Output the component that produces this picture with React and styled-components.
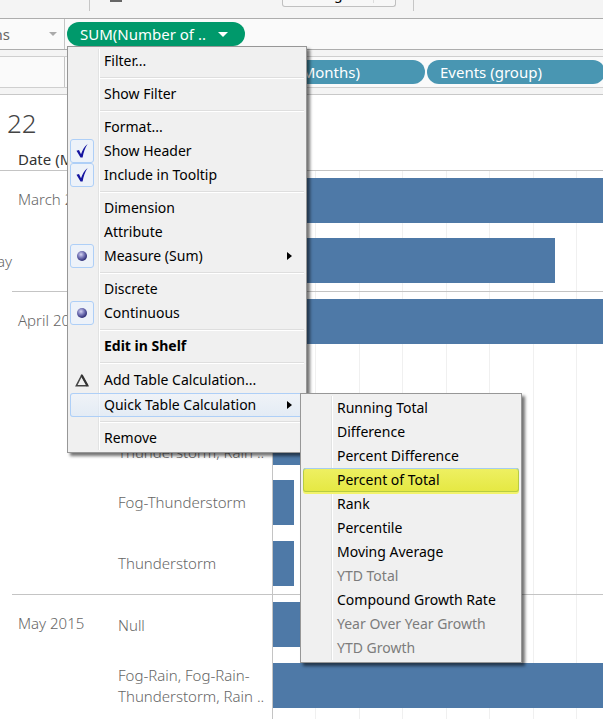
import React from "react";
import styled, { createGlobalStyle, css } from "styled-components";

const uiFont = '"Noto Sans", "Open Sans", sans-serif';
const viewFont = '"Noto Sans", "Open Sans", sans-serif';

const GlobalStyle = createGlobalStyle`
  * { box-sizing: border-box; }
  body { margin: 0; background: #fff; }
  button, input { font: inherit; color: inherit; margin: 0; }
`;

const Page = styled.div`
  display: flex;
  flex-direction: column;
  height: 100vh;
  overflow: hidden;
  background: #fff;
  font-family: ${viewFont};
`;

/* ---- toolbar ---- */
const Toolbar = styled.header`
  display: flex;
  align-items: flex-start;
  flex: none;
  height: 18px;
  background: #f4f4f4;
`;
const ToolDivider = styled.span`
  width: 1px;
  height: 11px;
  background: #c6c6c6;
  margin-left: ${(p) => p.$gap}px;
`;
const ToolGlyph = styled.span`
  width: 12px;
  height: 2px;
  margin-left: 20px;
  background: #666;
`;
const FitButton = styled.button`
  display: flex;
  align-items: flex-end;
  width: 114px;
  height: 7px;
  margin-left: 160px;
  padding: 0 0 3px 51px;
  overflow: hidden;
  border: 1px solid #c0c0c0;
  border-top: 0;
  border-radius: 0 0 3px 3px;
  background: #f7f7f7;
  font-size: 14px;
  line-height: 18px;
`;
const FitSplit = styled.span`
  width: 1px;
  height: 18px;
  margin-left: 30px;
  background: #ddd;
`;

/* ---- shelves ---- */
const Shelf = styled.section`
  display: flex;
  flex: none;
  height: 32px;
  background: #fafafa;
  border: solid ${(p) => p.$line};
  border-width: 1px 0;
`;
const ShelfGap = styled.div`
  flex: none;
  height: 6px;
  background: #f4f4f4;
`;
const ShelfLabel = styled.div`
  display: flex;
  align-items: center;
  width: 65px;
  border-right: 1px solid #c4c4c4;
  color: #666;
  font-size: 15px;
`;
const ClippedName = styled.span`
  display: flex;
  justify-content: flex-end;
  width: 10px;
  margin-right: 39px;
  overflow: hidden;
`;
const Pills = styled.div`
  display: flex;
  flex: 1;
  align-items: center;
  gap: 2px;
  min-width: 0;
  padding-left: ${(p) => p.$start}px;
`;
const PillAnchor = styled.div`
  position: relative;
  z-index: 2;
`;
const Pill = styled.button`
  display: flex;
  flex: none;
  align-items: center;
  gap: 12px;
  width: 178px;
  height: 24px;
  padding: 0 13px;
  border: 0;
  border-radius: 12px;
  background: ${(p) => p.$color};
  color: #fff;
  font-size: 15px;
  line-height: 24px;
  white-space: nowrap;
`;

/* ---- menus ---- */
const MenuPanel = styled.div`
  position: absolute;
  top: ${(p) => (p.$sub ? "0" : "100%")};
  left: ${(p) => (p.$sub ? "230px" : "0")};
  z-index: 3;
  width: ${(p) => (p.$sub ? 222 : 240)}px;
  padding: 2px;
  border: 1px solid #979797;
  background: linear-gradient(to right, transparent 28px, #e2e3e3 28px, #e2e3e3 29px, #fff 29px, #fff 30px, transparent 30px) 2px 2px / calc(100% - 4px) calc(100% - 4px) no-repeat #f0f0f0;
  box-shadow: 3px 3px 3px rgba(0, 0, 0, 0.55);
  color: #000;
  font-family: ${uiFont};
  font-size: 14px;
  line-height: 22px;
`;
const Anchor = styled.div`
  position: relative;
`;
const rowStyle = css`
  display: grid;
  grid-template-columns: 24px 1fr 6px;
  column-gap: 10px;
  align-items: center;
  width: 100%;
  height: ${(p) => (p.$tall ? 26 : 24)}px;
  padding: 0 11px 0 0;
  border: 0;
  background: none;
  text-align: left;
  white-space: nowrap;
`;
const MenuButton = styled.button`
  ${rowStyle}
  font-weight: ${(p) => (p.$strong ? 700 : 400)};
  &:disabled { color: #7c7c7c; }
  ${(p) =>
    p.$tone === "hover" &&
    css`
      border-radius: 3px;
      box-shadow: inset 0 0 0 1px #aecff7;
      background: linear-gradient(rgba(240, 245, 252, 0.6), rgba(218, 232, 248, 0.6));
    `}
  ${(p) =>
    p.$tone === "marked" &&
    css`
      border-radius: 3px;
      box-shadow: inset 0 1px #a5cdf0, inset 0 0 0 1px #b7cc42, 0 2px #f2f36a;
      background: linear-gradient(#eef063, #e5e842);
    `}
`;
const MenuToggle = styled.label`
  ${rowStyle}
`;
const ToggleCell = styled.span`
  display: grid;
  place-items: center;
  > * { grid-area: 1 / 1; }
`;
const ToggleBox = styled.input`
  appearance: none;
  width: 24px;
  height: 24px;
  border: 1px solid #aecff7;
  border-radius: 3px;
  background: #edf2f9;
`;
const IconCell = styled.span`
  display: grid;
  place-items: center;
`;
const Separator = styled.hr`
  height: 2px;
  margin: 4px 0 3px 30px;
  border: 0;
  border-top: 1px solid #dedede;
  background: #fff;
`;

/* ---- view ---- */
const View = styled.main`
  display: flex;
  flex: 1;
  flex-direction: column;
  min-height: 0;
  border-top: 1px solid #c8c8c8;
`;
const Title = styled.h1`
  margin: 0;
  padding: 10px 0 2px 7px;
  color: #444;
  font-size: 26px;
  font-weight: 300;
  line-height: 36px;
`;
const FieldHeader = styled.div`
  height: 28px;
  padding: 6px 0 0 18px;
  border-bottom: 1px solid #c4c4c4;
  color: #333;
  font-size: 15px;
  line-height: 20px;
`;
const Chart = styled.div`
  display: flex;
  flex: 1;
  min-height: 0;
  overflow: hidden;
  color: #666;
  font-size: 15px;
  font-weight: 300;
  line-height: 21px;
`;
const OuterLabels = styled.div`
  display: flex;
  justify-content: flex-end;
  flex: none;
  width: 12px;
  padding-top: 80px;
`;
const Groups = styled.div`
  position: relative;
  flex: 1;
`;
const Gridlines = styled.div`
  position: absolute;
  inset: 0 0 0 260px;
  display: grid;
  grid-template-columns: repeat(7, 44fr) 26fr;
  border-left: 1px solid #c4c4c4;
`;
const Gridline = styled.span`
  border-right: 1px solid #f0f0f0;
  &:last-child { border: 0; }
`;
const Group = styled.section`
  position: relative;
  display: grid;
  grid-template-columns: 100px 1fr;
  height: ${(p) => p.$height}px;
  border-bottom: ${(p) => (p.$last ? "0" : "1px solid #c4c4c4")};
`;
const Month = styled.div`
  padding: 18px 0 0 6px;
  white-space: nowrap;
`;
const Rows = styled.div`
  display: grid;
  grid-auto-rows: 1fr;
`;
const Row = styled.div`
  display: grid;
  grid-template-columns: 161px 1fr;
  min-height: 0;
`;
const RowLabel = styled.div`
  align-self: center;
  padding: 0 0 1px 6px;
  white-space: pre;
`;
const Bar = styled.div`
  height: 45px;
  margin-top: 7px;
  background: #4e79a7;
`;

const Caret = ({ w, h, color }) => (
  <svg width={w} height={h} viewBox="0 0 10 6" preserveAspectRatio="none" aria-hidden="true">
    <path d="M0 0h10L5 6z" fill={color} />
  </svg>
);
const SubArrow = () => (
  <svg width="5" height="8" viewBox="0 0 5 8" aria-hidden="true">
    <path d="M0 0l5 4-5 4z" fill="#000" />
  </svg>
);
const Tick = () => (
  <svg width="14" height="16" viewBox="0 0 14 16" aria-hidden="true">
    <path d="M1.500 7.800L4 7l2 4.200C7.300 7.500 9 4 12.600 1c-2.600 4-4 8-5 13.500H5.500z" fill="#1414a0" />
  </svg>
);
const Dot = () => (
  <svg width="12" height="12" viewBox="0 0 12 12" aria-hidden="true">
    <defs>
      <radialGradient id="ball" cx="0.4" cy="0.35" r="0.65">
        <stop offset="0" stopColor="#d4d4f2" />
        <stop offset="0.5" stopColor="#7777b8" />
        <stop offset="1" stopColor="#2b2b74" />
      </radialGradient>
    </defs>
    <circle cx="6" cy="6" r="5" fill="url(#ball)" />
  </svg>
);
const Delta = () => (
  <svg width="14" height="13" viewBox="0 0 14 13" aria-hidden="true">
    <path d="M6.600 1.500L1.300 11.800h11.400z" fill="none" stroke="#444" strokeWidth="1.500" />
    <path d="M6.600 1l6 11" stroke="#333" strokeWidth="2.200" />
  </svg>
);

function Action({ children, icon, arrow, ...rest }) {
  return (
    <MenuButton type="button" role="menuitem" {...rest}>
      <IconCell>{icon}</IconCell>
      <span>{children}</span>
      {arrow && <SubArrow />}
    </MenuButton>
  );
}
function Toggle({ type, name, children, arrow }) {
  return (
    <MenuToggle>
      <ToggleCell>
        <ToggleBox type={type} name={name} defaultChecked />
        {type === "radio" ? <Dot /> : <Tick />}
      </ToggleCell>
      <span>{children}</span>
      {arrow && <SubArrow />}
    </MenuToggle>
  );
}

const calculations = [
  { name: "Running Total" },
  { name: "Difference" },
  { name: "Percent Difference" },
  { name: "Percent of Total", tone: "marked" },
  { name: "Rank" },
  { name: "Percentile" },
  { name: "Moving Average" },
  { name: "YTD Total", off: true },
  { name: "Compound Growth Rate" },
  { name: "Year Over Year Growth", off: true },
  { name: "YTD Growth", off: true },
];

const fogRain = "Fog-Rain, Fog-Rain-\nThunderstorm, Rain ..";
const groups = [
  { month: "March 2015", height: 121, rows: [["", 100], ["", 85.5]] },
  {
    month: "April 2015",
    height: 303,
    rows: [["", 100], ["", 6.5], [fogRain, 12], ["Fog-Thunderstorm", 6.5], ["Thunderstorm", 6.5]],
  },
  { month: "May 2015", height: 122, rows: [["Null", 13], [fogRain, 100]] },
];

function FieldMenu() {
  return (
    <MenuPanel role="menu">
      <Action>Filter...</Action>
      <Separator />
      <Action>Show Filter</Action>
      <Separator />
      <Action>Format...</Action>
      <Toggle type="checkbox">Show Header</Toggle>
      <Toggle type="checkbox">Include in Tooltip</Toggle>
      <Separator />
      <Action>Dimension</Action>
      <Action>Attribute</Action>
      <Toggle type="radio" name="role" arrow>Measure (Sum)</Toggle>
      <Separator />
      <Action>Discrete</Action>
      <Toggle type="radio" name="kind">Continuous</Toggle>
      <Separator />
      <Action $strong>Edit in Shelf</Action>
      <Separator />
      <Action $tall icon={<Delta />}>Add Table Calculation...</Action>
      <Anchor>
        <Action $tone="hover" arrow>Quick Table Calculation</Action>
        <MenuPanel role="menu" $sub>
          {calculations.map((c) => (
            <Action key={c.name} $tone={c.tone} disabled={c.off}>{c.name}</Action>
          ))}
        </MenuPanel>
      </Anchor>
      <Separator />
      <Action>Remove</Action>
    </MenuPanel>
  );
}

export default function App() {
  return (
    <Page>
      <GlobalStyle />
      <Toolbar>
        <ToolDivider $gap={89} />
        <ToolGlyph />
        <FitButton type="button">g<FitSplit /></FitButton>
        <ToolDivider $gap={17} />
      </Toolbar>
      <Shelf $line="#adadad">
        <ShelfLabel>
          <ClippedName>ns</ClippedName>
          <Caret w={8} h={4} color="#aaa" />
        </ShelfLabel>
        <Pills $start={2}>
          <PillAnchor>
            <Pill type="button" $color="#00996b">
              SUM(Number of ..
              <Caret w={10} h={5} color="#fff" />
            </Pill>
            <FieldMenu />
          </PillAnchor>
        </Pills>
      </Shelf>
      <ShelfGap />
      <Shelf $line="#cfcfcf">
        <ShelfLabel />
        <Pills $start={182}>
          <Pill type="button" $color="#4996b2">Date (Months)</Pill>
          <Pill type="button" $color="#4996b2">Events (group)</Pill>
        </Pills>
      </Shelf>
      <ShelfGap />
      <View>
        <Title>22</Title>
        <FieldHeader>Date (Months)</FieldHeader>
        <Chart>
          <OuterLabels>ay</OuterLabels>
          <Groups>
            <Gridlines>
              {Array.from({ length: 8 }, (_, i) => <Gridline key={i} />)}
            </Gridlines>
            {groups.map((g, i) => (
              <Group key={g.month} $height={g.height} $last={i === groups.length - 1}>
                <Month>{g.month}</Month>
                <Rows>
                  {g.rows.map(([label, value], n) => (
                    <Row key={n}>
                      <RowLabel>{label}</RowLabel>
                      <Bar style={{ width: `${value}%` }} />
                    </Row>
                  ))}
                </Rows>
              </Group>
            ))}
          </Groups>
        </Chart>
      </View>
    </Page>
  );
}
